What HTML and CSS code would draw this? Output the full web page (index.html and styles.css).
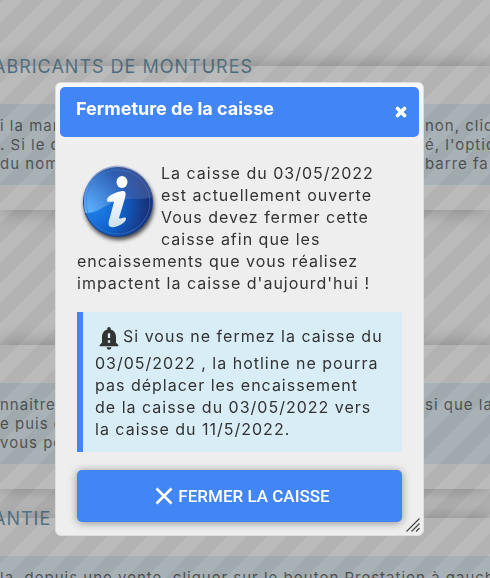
FILE: index.html
```html
<!DOCTYPE html>
<html lang="fr">
<head>
    <meta charset="UTF-8">
    <meta name="viewport" content="width=device-width, initial-scale=1.0">
    <title>Fermeture de la caisse</title>
    <link rel="stylesheet" href="styles.css">
</head>
<body>
    <main class="page">
        <section class="panel">
            <h2 class="panel-title">ABRICANTS DE MONTURES</h2>
            <div class="help">
                <div class="help-line"><span class="help-start">i la mar</span><span class="help-end">non, cliq</span></div>
                <div class="help-line"><span class="help-start">. Si le c</span><span class="help-end">é, l'optic</span></div>
                <div class="help-line"><span class="help-start">du nom</span><span class="help-end">barre fa</span></div>
            </div>
        </section>
        <section class="panel panel-spaced">
            <div class="help">
                <div class="help-line"><span class="help-start">nnaitre</span><span class="help-end">si que la</span></div>
                <div class="help-line"><span class="help-start">e puis c</span></div>
                <div class="help-line"><span class="help-start">vous po</span></div>
            </div>
        </section>
        <section class="panel panel-close">
            <h2 class="panel-title">ANTIE</h2>
            <div class="help">
                <div>la, depuis une vente, cliquer sur le bouton Prestation à gauch</div>
            </div>
        </section>
    </main>

    <div class="overlay">
        <div class="dialog" role="dialog" aria-labelledby="dialogTitle">
            <div class="dialog-header">
                <h1 id="dialogTitle">Fermeture de la caisse</h1>
                <button type="button" class="close" aria-label="Fermer">
                    <svg width="12" height="12" viewBox="0 0 12 12"><path d="M2.5 2.5l7 7M9.500 2.500l-7 7" stroke="#fff" stroke-width="3.600" stroke-linecap="round"/></svg>
                </button>
            </div>
            <div class="dialog-body">
                <svg class="info" width="84" height="84" viewBox="0 0 84 84" aria-hidden="true">
                    <defs>
                        <radialGradient id="ball" cx="0.15" cy="0.55" r="0.85">
                            <stop offset="0" stop-color="#1f86ee"/>
                            <stop offset="0.5" stop-color="#0f5fc6"/>
                            <stop offset="1" stop-color="#1b2a6b"/>
                        </radialGradient>
                        <linearGradient id="gloss" x1="0" y1="0.8" x2="1" y2="0.2">
                            <stop offset="0" stop-color="#6bb8ff" stop-opacity="0.8"/>
                            <stop offset="0.6" stop-color="#4a68b0" stop-opacity="0.5"/>
                            <stop offset="1" stop-color="#8a93c4" stop-opacity="0.3"/>
                        </linearGradient>
                        <linearGradient id="letter" x1="0" y1="0" x2="0" y2="1">
                            <stop offset="0" stop-color="#fff"/>
                            <stop offset="1" stop-color="#cfdfee"/>
                        </linearGradient>
                        <filter id="soft" x="-20%" y="-20%" width="140%" height="140%"><feGaussianBlur stdDeviation="2"/></filter>
                    </defs>
                    <circle cx="42" cy="43" r="35" fill="#000" opacity="0.7" filter="url(#soft)"/>
                    <circle cx="41" cy="40" r="34.500" fill="url(#ball)" stroke="#1b418f"/>
                    <path d="M8 51C24 52 31 37 52 37C62 37 70 37 75 35A34 34 0 0 0 7 40Q7 46 8 51Z" fill="url(#gloss)"/>
                    <circle cx="41" cy="40" r="32" fill="none" stroke="#3a7bd6" opacity="0.6"/>
                    <ellipse cx="45" cy="20" rx="5.500" ry="6" fill="#fff"/>
                    <path d="M30 38C30 33 42 29 46 29C49 29 49 32 48 36L42 56C43 58 49 53 49 57C48 62 38 66 34 65C30 64 32 58 33 55L37 40C35 38 30 42 30 38Z" fill="url(#letter)"/>
                </svg>
                <p>La caisse du 03/05/2022 est actuellement ouverte<br>Vous devez fermer cette caisse afin que les encaissements que vous réalisez impactent la caisse d'aujourd'hui !</p>
            </div>
            <div class="warning">
                <svg class="bell" width="28" height="28" viewBox="0 0 24 24" aria-hidden="true"><path fill="#333" d="M12 22c1.100 0 2-.9 2-2h-4c0 1.100.9 2 2 2zm6-6v-5c0-3.070-1.630-5.640-4.500-6.320V4c0-.83-.67-1.500-1.500-1.500s-1.500.67-1.500 1.500v.68C7.640 5.360 6 7.920 6 11v5l-2 2v1h16v-1l-2-2zm-5 0h-2v-2h2v2zm0-4h-2V8h2v4z"/></svg>Si vous ne fermez la caisse du 03/05/2022 , la hotline ne pourra pas déplacer les encaissement de&nbsp;la caisse du 03/05/2022 vers la caisse du 11/5/2022.
            </div>
            <button type="button" class="submit">
                <svg width="18" height="18" viewBox="0 0 18 18" aria-hidden="true"><path d="M1.500 1.500l15 15M16.500 1.500l-15 15" stroke="#fff" stroke-width="2.600"/></svg>
                FERMER LA CAISSE
            </button>
            <svg class="grip" width="14" height="14" viewBox="0 0 14 14" aria-hidden="true"><path d="M0.500 13.500l13-13M5.500 13.500l8-8M10 13.500l3.500-3.500" stroke="#444" stroke-width="1.200"/></svg>
        </div>
    </div>
</body>
</html>
```

FILE: styles.css
```css
* {
    box-sizing: border-box;
}
body {
    margin: 0;
    font-family: Inter, sans-serif;
    font-size: 16px;
    line-height: 22px;
    letter-spacing: 1px;
    color: #333;
    background-color: #fff;
}
.page {
    height: 100vh;
    padding-top: 66px;
    overflow: hidden;
}
.panel {
    min-height: 144px;
    padding-top: 38px;
    background-color: #fff;
    box-shadow: 0 0 20px rgba(0, 0, 0, 0.4);
}
.panel-spaced {
    margin-top: 135px;
}
.panel-close {
    margin-top: 29px;
}
.panel-title {
    height: 24px;
    margin: -49px 0 25px;
    margin-left: -7px;
    font-size: 18px;
    font-weight: 400;
    line-height: 24px;
    color: #31708f;
}
.help {
    height: 81px;
    padding: 12px 0;
    font-size: 15px;
    line-height: 19px;
    white-space: nowrap;
    background-color: #d9edf7;
}
.help-line {
    display: grid;
    grid-template-columns: 425px 1fr;
}
.overlay {
    position: fixed;
    inset: 0;
    display: flex;
    justify-content: center;
    align-items: flex-start;
    padding: 82px 66px 0 55px;
    background: linear-gradient(135deg, rgba(102, 102, 102, 0.5) 25%, rgba(118, 118, 118, 0.5) 25% 50%, rgba(102, 102, 102, 0.5) 50% 75%, rgba(118, 118, 118, 0.5) 75%) 24px 0 / 40px 40px;
}
.dialog {
    position: relative;
    width: 100%;
    padding: 4px;
    background: #eee linear-gradient(#f8f8f8, #eee) 0 0 / 100% 70px no-repeat;
    border: 1px solid #ddd;
    border-radius: 6px;
}
.dialog-header {
    display: flex;
    justify-content: space-between;
    height: 50px;
    padding: 11px 12px 0 16px;
    color: #fff;
    background-color: #4285f4;
    border-radius: 5px;
}
.dialog-header h1 {
    margin: 0;
    font-size: 18px;
    line-height: 22px;
    letter-spacing: 0;
}
.close {
    align-self: flex-start;
    margin-top: 8px;
    padding: 0;
    line-height: 0;
    background: none;
    border: none;
    cursor: pointer;
}
.dialog-body {
    padding: 25px 17px 0;
}
.dialog-body p {
    margin: 0;
}
.info {
    float: left;
}
.warning {
    margin: 18px 17px 18px;
    padding: 12px;
    background-color: #d9edf7;
    border-left: 6px solid #4285f4;
}
.bell {
    vertical-align: middle;
}
.submit {
    display: flex;
    justify-content: center;
    align-items: center;
    gap: 5px;
    width: calc(100% - 34px);
    height: 52px;
    margin: 0 17px 9px;
    padding: 0 0 0 6px;
    font-family: Roboto, sans-serif;
    font-size: 17px;
    font-weight: 500;
    color: #fff;
    background-color: #4285f4;
    border: none;
    border-radius: 5px;
    box-shadow: 0 1px 8px rgba(0, 0, 0, 0.4);
    cursor: pointer;
}
.grip {
    position: absolute;
    right: 3px;
    bottom: 3px;
}
```
